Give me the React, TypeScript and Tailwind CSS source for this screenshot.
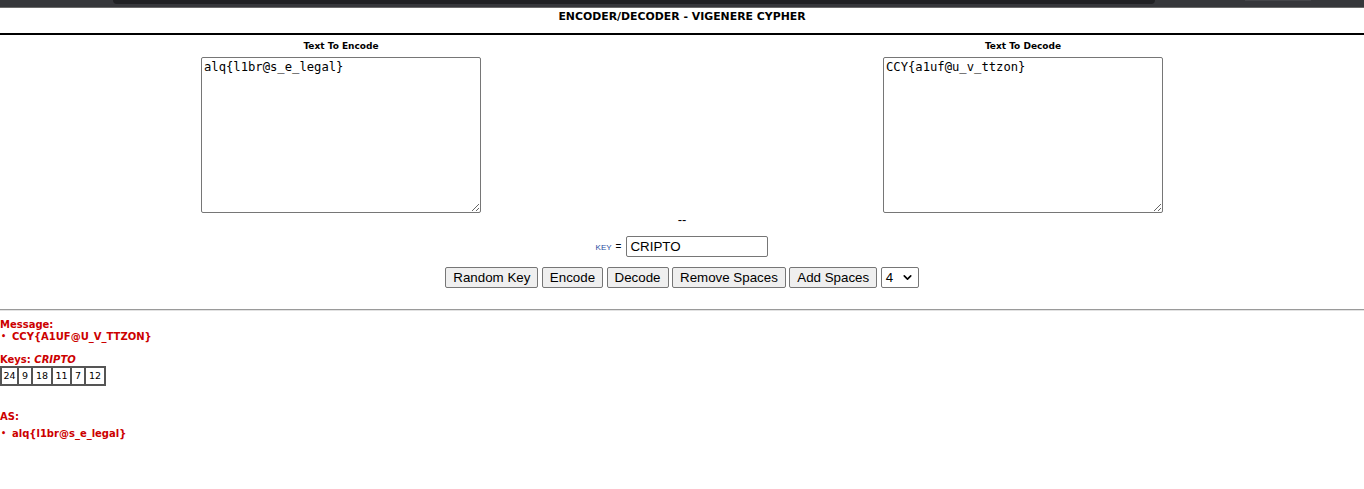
import { ChevronDown } from 'lucide-react';

const verdana = { fontFamily: '"DejaVu Sans", Verdana, sans-serif' };

function Btn({ label }: { label: string }) {
  return (
    <button className="h-[21px] rounded-[2px] border border-[#767676] bg-[#efefef] px-[7px] text-[13.33px] leading-[15px] text-black">
      {label}
    </button>
  );
}

function Bullet({ text }: { text: string }) {
  return (
    <div className="flex h-[12px] items-center">
      <span className="w-[12px] pl-[1px] text-[8px] leading-[12px]">•</span>
      <span className="leading-[12px]">{text}</span>
    </div>
  );
}

export default function App() {
  const keys = [
    { n: '24', w: 'w-[17px]' },
    { n: '9', w: 'w-[14px]' },
    { n: '18', w: 'w-[20px]' },
    { n: '11', w: 'w-[19px]' },
    { n: '7', w: 'w-[14px]' },
    { n: '12', w: 'w-[20px]' },
  ];

  return (
    <div className="h-[489px] w-full overflow-hidden bg-white font-['Liberation_Sans',Arial,sans-serif] text-black">
      {/* browser chrome remnant */}
      <div className="flex h-[7px] bg-[#36373b]">
        <div className="ml-[113px] h-[4px] w-[1042px] rounded-b-[4px] bg-[#202124]" />
        <div className="ml-[90px] h-[1px] w-[66px] bg-[#45464a]" />
      </div>
      <div className="h-px bg-[#6b6b6b]" />

      <div className="h-[25px] pt-[2px] text-center text-[10.9px] font-bold leading-[13px]" style={verdana}>
        ENCODER/DECODER - VIGENERE CYPHER
      </div>
      <div className="h-[2px] bg-black" />

      <div className="flex pt-[5px]">
        <div className="flex w-1/2 flex-col items-center">
          <div className="h-[12px] text-[9px] font-bold leading-[12px]" style={verdana}>
            Text To Encode
          </div>
          <textarea
            defaultValue="alq{l1br@s_e_legal}"
            className="mt-[5px] h-[156px] w-[280px] rounded-[2px] border border-[#767676] p-[2px] font-['DejaVu_Sans_Mono',monospace] text-[12.2px] leading-[14px]"
          />
        </div>
        <div className="flex w-1/2 flex-col items-center">
          <div className="h-[12px] text-[9px] font-bold leading-[12px]" style={verdana}>
            Text To Decode
          </div>
          <textarea
            defaultValue="CCY{a1uf@u_v_ttzon}"
            className="mt-[5px] h-[156px] w-[280px] rounded-[2px] border border-[#767676] p-[2px] font-['DejaVu_Sans_Mono',monospace] text-[12.2px] leading-[14px]"
          />
        </div>
      </div>

      <div className="h-[14px] text-center text-[13px] leading-[14px]">--</div>

      <div className="mt-[9px] flex items-center justify-center">
        <span className="pt-[2px] text-[8px] text-[#1f4aa0]">KEY</span>
        <span className="ml-[4px] mr-[5px] text-[10px]">=</span>
        <input
          defaultValue="CRIPTO"
          className="h-[21px] w-[142px] rounded-[2px] border border-[#767676] px-[3px] text-[13.33px]"
        />
      </div>

      <div className="mt-[10px] flex items-center justify-center gap-[3.5px]">
        <Btn label="Random Key" />
        <Btn label="Encode" />
        <Btn label="Decode" />
        <Btn label="Remove Spaces" />
        <Btn label="Add Spaces" />
        <div className="flex h-[21px] w-[38px] items-center justify-between rounded-[2px] border border-[#767676] bg-white pl-[4px] pr-[4px] text-[13.33px]">
          <span>4</span>
          <ChevronDown size={13} strokeWidth={3} />
        </div>
      </div>

      <div className="mt-[21px] h-px bg-[#9a9a9a]" />
      <div className="h-px bg-[#e2e2e2]" />

      <div className="pt-[8px] text-[10px] font-bold text-[#cc0000]" style={verdana}>
        <div className="h-[12px] leading-[12px]">Message:</div>
        <Bullet text="CCY{A1UF@U_V_TTZON}" />

        <div className="mt-[11px] h-[12px] leading-[12px]">
          Keys: <span className="italic">CRIPTO</span>
        </div>
        <div className="flex w-fit border border-[#555]">
          {keys.map((k) => (
            <div
              key={k.n}
              className={`${k.w} h-[18px] border border-[#555] text-center text-[9.5px] font-normal leading-[16px] text-black`}
            >
              {k.n}
            </div>
          ))}
        </div>

        <div className="mt-[25px] h-[12px] leading-[12px]">AS:</div>
        <div className="mt-[5px]">
          <Bullet text="alq{l1br@s_e_legal}" />
        </div>
      </div>
    </div>
  );
}
